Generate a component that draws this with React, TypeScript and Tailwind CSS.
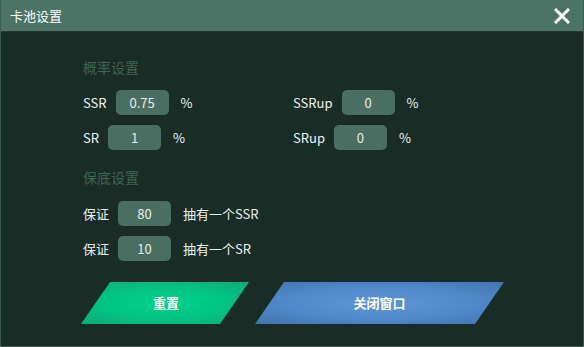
const font = { fontFamily: '"Noto Sans CJK SC", "Noto Sans", sans-serif' };

const Field = ({ value }: { value: string }) => (
  <div className="ml-[9px] mr-3 flex h-[25px] w-[53px] items-center justify-center rounded-[5px] bg-[#4a6e62] text-[13px] text-[#e8efec]">
    {value}
  </div>
);

const Row = ({ label, value, suffix }: { label: string; value: string; suffix: string }) => (
  <div className="flex items-center text-[13px] text-[#eef3f1]">
    <span>{label}</span>
    <Field value={value} />
    <span>{suffix}</span>
  </div>
);

export default function App() {
  return (
    <div
      className="flex h-[347px] w-[584px] flex-col overflow-hidden border-x border-b border-[#3d5e53] bg-[#1a2c26]"
      style={font}
    >
      {/* Header */}
      <div className="flex h-[32px] shrink-0 items-center justify-between border-b border-[#233a33] bg-[#4b7366] pl-[9px] pr-[12px]">
        <span className="text-[13px] text-white">卡池设置</span>
        <svg width="16" height="16" viewBox="0 0 16 16" className="mr-[1px]">
          <path d="M2 2 L14 14 M14 2 L2 14" stroke="#fff" strokeWidth="3" strokeLinecap="square" />
        </svg>
      </div>

      {/* Body */}
      <div className="flex flex-col pl-[82px] pt-[25px]">
        <div className="text-[14px] leading-[20px] text-[#3f6357]">概率设置</div>
        <div className="mt-[13px] grid grid-cols-[210px_auto] gap-y-[10px]">
          <Row label="SSR" value="0.75" suffix="%" />
          <Row label="SSRup" value="0" suffix="%" />
          <Row label="SR" value="1" suffix="%" />
          <Row label="SRup" value="0" suffix="%" />
        </div>

        <div className="mt-[17px] text-[14px] leading-[20px] text-[#3f6357]">保底设置</div>
        <div className="mt-[14px] flex flex-col gap-y-[10px]">
          <Row label="保证" value="80" suffix="抽有一个SSR" />
          <Row label="保证" value="10" suffix="抽有一个SR" />
        </div>

        <div className="-ml-[2px] mt-[21px] flex gap-[6px]">
          <button className="flex h-[42px] w-[168px] items-center justify-center bg-[radial-gradient(ellipse_at_center,#00d28b_0%,#04c283_55%,#10a877_100%)] pl-[2px] text-[13px] font-bold text-white [clip-path:polygon(29px_0,100%_0,calc(100%_-_29px)_100%,0_100%)]">
            重置
          </button>
          <button className="flex h-[42px] w-[249px] items-center justify-center bg-[radial-gradient(ellipse_at_center,#5d95d8_0%,#5088c9_55%,#4274ae_100%)] text-[13px] font-bold text-white [clip-path:polygon(29px_0,100%_0,calc(100%_-_29px)_100%,0_100%)]">
            关闭窗口
          </button>
        </div>
      </div>
    </div>
  );
}
